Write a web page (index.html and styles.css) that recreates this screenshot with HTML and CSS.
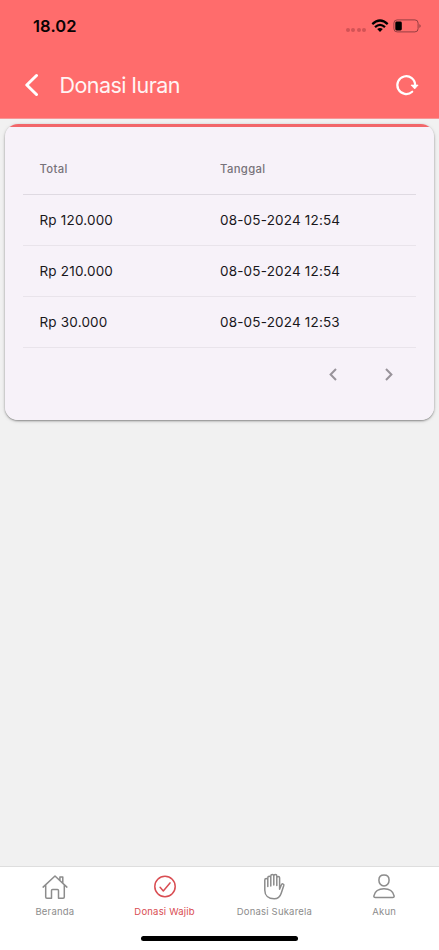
FILE: index.html
```html
<!DOCTYPE html>
<html lang="id">
<head>
<meta charset="utf-8">
<meta name="viewport" content="width=device-width, initial-scale=1">
<title>Donasi Iuran</title>
<link rel="stylesheet" href="styles.css">
</head>
<body>
<div class="app">
  <header class="header">
    <div class="status">
      <span class="time">18.02</span>
      <div class="signal"><i></i><i></i><i></i><i></i></div>
      <svg class="wifi" width="18" height="14" viewBox="0 0 18 14" fill="none" stroke="#000" stroke-width="2.2">
        <path d="M1.3 5.1Q9-2.1 16.7 5.1"/><path d="M4 8.1Q9 3.5 14 8.1"/><path d="M9 13L6.2 10.1Q9 8 11.8 10.1Z" fill="#000" stroke="none"/>
      </svg>
      <svg class="battery" width="29" height="14" viewBox="0 0 29 14" fill="none">
        <rect x=".9" y=".9" width="24.2" height="12" rx="3.2" stroke="#963f42"/><rect x="2.3" y="2.5" width="6.5" height="8.9" rx="1.4" fill="#000"/><path d="M26.4 5Q29 6.9 26.4 8.9Z" fill="#963f42"/>
      </svg>
    </div>
    <div class="titlebar">
      <svg class="back" width="14" height="24" viewBox="0 0 14 24" fill="none" stroke="#fff" stroke-width="3" stroke-linecap="round" stroke-linejoin="round"><path d="M11.5 2.5L1.8 12l9.7 9.5"/></svg>
      <h1>Donasi Iuran</h1>
      <svg class="refresh" width="24" height="22" viewBox="0 0 24 22" fill="none" stroke="#fff" stroke-width="2.2"><path d="M17.2 17.7A8.9 8.9 0 1 1 20.1 11.3" stroke-linecap="round"/><path d="M16 11.1h7.1l-3.4 3.8Z" fill="#fff" stroke-width=".8" stroke-linejoin="round"/></svg>
    </div>
  </header>
  <main class="content">
    <section class="card">
      <table>
        <thead><tr><th>Total</th><th>Tanggal</th></tr></thead>
        <tbody>
          <tr><td>Rp 120.000</td><td>08-05-2024 12:54</td></tr>
          <tr><td>Rp 210.000</td><td>08-05-2024 12:54</td></tr>
          <tr><td>Rp 30.000</td><td>08-05-2024 12:53</td></tr>
        </tbody>
      </table>
      <div class="pager">
        <svg width="8" height="13" viewBox="0 0 8 13"><path d="M7 1L1.6 6.5 7 12"/></svg>
        <svg width="8" height="13" viewBox="0 0 8 13"><path d="M1 1l5.4 5.5L1 12"/></svg>
      </div>
    </section>
  </main>
  <nav class="tabs">
    <a class="tab">
      <svg width="28" height="28" viewBox="0 0 28 28"><path d="M2.1 14.1L14 3l11.9 11.1M4.7 12v12q0 1.2 1.2 1.2h4.6v-7.7q0-1.1 1.1-1.1h4.8q1.1 0 1.1 1.1v7.7h4.6q1.2 0 1.2-1.2V12M18.9 7V4h2.9v6"/></svg>
      <span>Beranda</span>
    </a>
    <a class="tab active">
      <svg width="28" height="28" viewBox="0 0 28 28"><circle cx="14" cy="13.5" r="10.2"/><path d="M9.1 14.3l3.2 3.6 6.7-8"/></svg>
      <span>Donasi Wajib</span>
    </a>
    <a class="tab">
      <svg width="28" height="28" viewBox="0 0 28 28"><path d="M7.8 13.5V4.8a1.5 1.5 0 0 1 3 0V13M10.8 4.8V3a1.5 1.5 0 0 1 3 0v9M13.8 3a1.5 1.5 0 0 1 3 0v9.5M16.8 4.8a1.4 1.4 0 0 1 2.8 0v11.4l1.5-3.7c.5-1.3 1-1.8 1.8-1.6.9.2 1.1.8.8 1.8l-2.5 7.6c-1.2 3.9-3.4 5.5-7 5.5-5.8 0-9.4-3.4-9.4-8.6V7a1.5 1.5 0 0 1 3 0"/></svg>
      <span>Donasi Sukarela</span>
    </a>
    <a class="tab">
      <svg width="28" height="28" viewBox="0 0 28 28"><path d="M8.9 7.3c0-3 1.9-5.2 5.1-5.2s5.1 2.2 5.1 5.2-2.1 5.6-5.1 5.6-5.1-2.6-5.1-5.6ZM14 15.8c5.2 0 9.1 2.8 10.1 7 .2 1-.3 1.7-1.4 1.7H5.3c-1.1 0-1.6-.7-1.4-1.7 1-4.2 4.9-7 10.1-7Z"/></svg>
      <span>Akun</span>
    </a>
  </nav>
  <div class="home"><i></i></div>
</div>
</body>
</html>
```
FILE: styles.css
```css
* { box-sizing: border-box; }
body { margin: 0; background: #f1f1f1; font-family: Inter, "Liberation Sans", sans-serif; }
.app { width: 439px; height: 950px; display: flex; flex-direction: column; overflow: hidden; }
svg { display: block; flex: none; }
.header { flex: none; height: 119px; background: #ff6c6c; border-bottom: 1px solid #f69797; }
.status { height: 52px; padding: 0 16px 0 33px; display: flex; align-items: center; }
.time { font-size: 16.5px; line-height: 20px; font-weight: 600; color: #090303; margin-right: auto; letter-spacing: .1px; }
.signal { display: flex; gap: 1.3px; margin: 8px 5px 0 0; }
.signal i { width: 4px; height: 4px; border-radius: 50%; background: #d25356; }
.wifi { margin-right: 4px; }
.battery { margin-right: 1px; }
.titlebar { height: 65px; padding: 0 20px 0 25px; display: flex; align-items: center; }
h1 { flex: 1; margin: 0 0 0 20.5px; color: #fff4f4; font-size: 21.5px; line-height: 28px; font-weight: 400; letter-spacing: -.57px; }
.content { flex: 1; padding: 5px 5px 0; }
.card { height: 296px; padding: 20px 18px 0; border-radius: 13px; background: linear-gradient(#f2676a 3px, #f7f2f9 3px); box-shadow: 0 1px 2px rgba(0,0,0,.38), 0 1px 4px rgba(0,0,0,.13); }
table { width: 100%; border-collapse: separate; border-spacing: 0; table-layout: fixed; }
th, td { height: 51px; padding: 0 0 0 16.5px; text-align: left; border-bottom: 1px solid #e9e4eb; }
th:first-child, td:first-child { width: 180.5px; }
th { border-bottom-color: #dfdae2; color: #77727a; font-size: 11.3px; line-height: 16px; font-weight: 500; letter-spacing: .35px; }
td { color: #19171b; font-size: 13.5px; line-height: 18px; font-weight: 400; letter-spacing: .18px; }
.pager { height: 53px; display: flex; align-items: center; justify-content: flex-end; gap: 48px; padding-right: 23px; }
.pager path { fill: none; stroke: #98939a; stroke-width: 2; }
.tabs { height: 62px; flex: none; background: #fff; border-top: 1px solid #dedede; display: flex; }
.tab { flex: 1; display: flex; flex-direction: column; align-items: center; padding-top: 6px; color: #8c8c8c; }
.tab svg { fill: none; stroke: currentColor; stroke-width: 1.5; stroke-linecap: round; stroke-linejoin: round; }
.tab span { margin-top: 5px; font-size: 9.5px; line-height: 12px; letter-spacing: .2px; white-space: nowrap; }
.tab.active { color: #d94d52; }
.home { height: 22px; flex: none; background: #fff; display: flex; justify-content: center; padding-top: 8px; }
.home i { width: 157px; height: 5px; background: #000; border-radius: 3px; }
```
